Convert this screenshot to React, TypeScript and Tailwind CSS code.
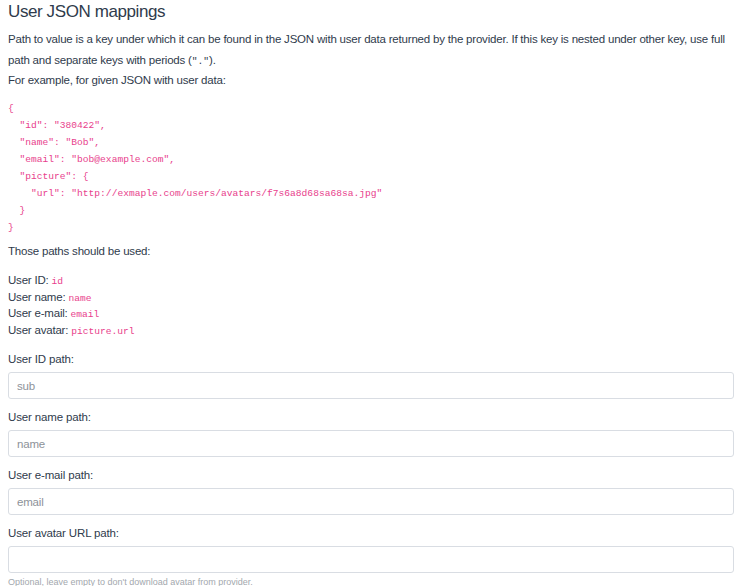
import React from 'react';

const codeSample = `{
  "id": "380422",
  "name": "Bob",
  "email": "bob@example.com",
  "picture": {
    "url": "http://exmaple.com/users/avatars/f7s6a8d68sa68sa.jpg"
  }
}`;

interface PathFieldProps {
  label: string;
  placeholder?: string;
  help?: string;
}

const PathField: React.FC<PathFieldProps> = ({ label, placeholder, help }) => (
  <div className="mb-[10px]">
    <label className="block text-[11.5px] leading-[16px] tracking-[-0.15px] mb-[5px]">{label}</label>
    <input
      type="text"
      placeholder={placeholder}
      className="block w-full h-[27px] rounded-[3px] border border-[#d9dde3] bg-white px-[8px] text-[11.5px] text-[#2f3b4c] placeholder:text-[#8d9299] outline-none"
    />
    {help && <p className="mt-[3px] text-[9px] leading-[12px] tracking-normal text-[#a3a8ae]">{help}</p>}
  </div>
);

const Code: React.FC<{ children: React.ReactNode }> = ({ children }) => (
  <code className="text-[#e83e8c] text-[9.6px] leading-none tracking-normal [font-family:'Liberation_Mono',monospace]">
    {children}
  </code>
);

const PathRow: React.FC<{ label: string; path: string }> = ({ label, path }) => (
  <div className="h-[16.5px] leading-[16.5px]">
    {label} <Code>{path}</Code>
  </div>
);

export default function App() {
  return (
    <div className="bg-white text-[#2f3b4c] pl-2 pr-[2px] [font-family:'Liberation_Sans',Arial,sans-serif] text-[11.5px] tracking-[-0.2px] h-[586px] overflow-hidden">
      <h3 className="text-[17px] leading-[24px] tracking-[-0.4px]">User JSON mappings</h3>
      <p className="mt-[5px] leading-[21px]">
        Path to value is a key under which it can be found in the JSON with user data returned by the provider. If
        this key is nested under other key, use full path and separate keys with periods (
        <span className="tracking-normal leading-none [font-family:'Liberation_Mono',monospace] text-[9.6px]">"."</span>).
      </p>
      <p className="mt-[1px] leading-[17px]">For example, for given JSON with user data:</p>
      <pre className="mt-[11px] text-[#e83e8c] text-[9.6px] leading-[17px] tracking-normal [font-family:'Liberation_Mono',monospace]">
        {codeSample}
      </pre>
      <p className="mt-[7px] leading-[17px]">Those paths should be used:</p>
      <div className="mt-[12px]">
        <PathRow label="User ID:" path="id" />
        <PathRow label="User name:" path="name" />
        <PathRow label="User e-mail:" path="email" />
        <PathRow label="User avatar:" path="picture.url" />
      </div>
      <div className="mt-[13px]">
        <PathField label="User ID path:" placeholder="sub" />
        <PathField label="User name path:" placeholder="name" />
        <PathField label="User e-mail path:" placeholder="email" />
        <PathField
          label="User avatar URL path:"
          help="Optional, leave empty to don't download avatar from provider."
        />
      </div>
    </div>
  );
}
